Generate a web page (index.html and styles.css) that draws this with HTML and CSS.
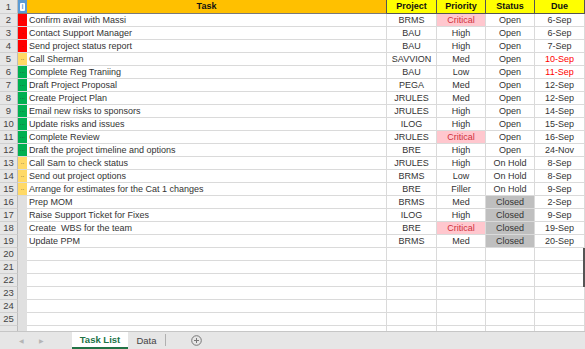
FILE: index.html
```html
<!DOCTYPE html>
<html lang="en">
<head>
    <meta charset="UTF-8">
    <title>Task List</title>
    <link rel="stylesheet" href="styles.css">
</head>
<body>
    <div class="sheet">
        <div class="row head">
            <div class="num">1</div>
            <div class="ind-head"><span class="info">i</span></div>
            <div class="h-task">Task</div>
            <div class="h-col">Project</div>
            <div class="h-col">Priority</div>
            <div class="h-col">Status</div>
            <div class="h-col">Due</div>
        </div>
        <div id="rows"></div>
        <div class="scroll-thumb"></div>
    </div>

    <div class="tabbar">
        <span class="arrow">&#9664;</span>
        <span class="arrow">&#9654;</span>
        <span class="tab active">Task List</span>
        <span class="tab">Data</span>
        <span class="add-tab">
            <svg width="11" height="11" viewBox="0 0 11 11">
                <circle cx="5.5" cy="5.5" r="4.8" fill="none" stroke="#777" stroke-width="1"/>
                <path d="M5.5 3v5M3 5.5h5" stroke="#777" stroke-width="1"/>
            </svg>
        </span>
    </div>

    <script>
        // task rows: task, project, priority, status, due, flag colour, late
        const tasks = [
            ['Confirm avail with Massi', 'BRMS', 'Critical', 'Open', '6-Sep', 'red'],
            ['Contact Support Manager', 'BAU', 'High', 'Open', '6-Sep', 'red'],
            ['Send project status report', 'BAU', 'High', 'Open', '7-Sep', 'red'],
            ['Call Sherman', 'SAVVION', 'Med', 'Open', '10-Sep', 'amber', true],
            ['Complete Reg Traniing', 'BAU', 'Low', 'Open', '11-Sep', 'green', true],
            ['Draft Project Proposal', 'PEGA', 'Med', 'Open', '12-Sep', 'green'],
            ['Create Project Plan', 'JRULES', 'Med', 'Open', '12-Sep', 'green'],
            ['Email new risks to sponsors', 'JRULES', 'High', 'Open', '14-Sep', 'green'],
            ['Update risks and issues', 'ILOG', 'High', 'Open', '15-Sep', 'green'],
            ['Complete Review', 'JRULES', 'Critical', 'Open', '16-Sep', 'green'],
            ['Draft the project timeline and options', 'BRE', 'High', 'Open', '24-Nov', 'green'],
            ['Call Sam to check status', 'JRULES', 'High', 'On Hold', '8-Sep', 'amber'],
            ['Send out project options', 'BRMS', 'Low', 'On Hold', '8-Sep', 'amber'],
            ['Arrange for estimates for the Cat 1 changes', 'BRE', 'Filler', 'On Hold', '9-Sep', 'amber'],
            ['Prep MOM', 'BRMS', 'Med', 'Closed', '2-Sep', 'grey'],
            ['Raise Support Ticket for Fixes', 'ILOG', 'High', 'Closed', '9-Sep', 'grey'],
            ['Create \u00a0WBS for the team', 'BRE', 'Critical', 'Closed', '19-Sep', 'grey'],
            ['Update PPM', 'BRMS', 'Med', 'Closed', '20-Sep', 'grey']
        ];

        const dots = { red: '.', amber: '..', green: '...', grey: '' };

        function buildRows() {
            const rows = document.getElementById('rows');
            let html = '';
            tasks.forEach((t, i) => {
                html += `
                    <div class="row">
                        <div class="num">${i + 2}</div>
                        <div class="ind ${t[5]}">${dots[t[5]]}</div>
                        <div class="cell task">${t[0]}</div>
                        <div class="cell">${t[1]}</div>
                        <div class="cell ${t[2] === 'Critical' ? 'critical' : ''}">${t[2]}</div>
                        <div class="cell ${t[3] === 'Closed' ? 'closed' : ''}">${t[3]}</div>
                        <div class="cell ${t[6] ? 'late' : ''}">${t[4]}</div>
                    </div>`;
            });
            for (let n = 20; n <= 25; n++) {
                html += `
                    <div class="row">
                        <div class="num">${n}</div>
                        <div class="ind grey"></div>
                        <div class="cell task"></div>
                        <div class="cell"></div>
                        <div class="cell"></div>
                        <div class="cell"></div>
                        <div class="cell"></div>
                    </div>`;
            }
            // partly hidden last row
            html += `
                <div class="row">
                    <div class="num"></div>
                    <div class="ind grey"></div>
                    <div class="cell task"></div>
                    <div class="cell"></div>
                    <div class="cell"></div>
                    <div class="cell"></div>
                    <div class="cell"></div>
                </div>`;
            rows.innerHTML = html;
        }

        buildRows();
    </script>
</body>
</html>
```

FILE: styles.css
```css
* {
    margin: 0;
    padding: 0;
    box-sizing: border-box;
}

body {
    width: 585px;
    height: 349px;
    overflow: hidden;
    background: #fff;
    font-family: 'Liberation Sans', Arial, sans-serif;
    font-size: 9px;
    color: #333;
}

.sheet {
    position: relative;
    height: 331px;
    overflow: hidden;
}

.row {
    display: grid;
    grid-template-columns: 18px 9px 360px 50px 49px 49px 50px;
    height: 13px;
    line-height: 12px;
}

.row.head {
    height: 14px;
    line-height: 13px;
}

.num {
    background: #e6e6e6;
    color: #444;
    font-size: 9.5px;
    text-align: center;
    border-right: 1px solid #bdbdbd;
    border-bottom: 1px solid #d0d0d0;
}

.ind-head {
    background: #5b9bd5;
    border-bottom: 1px solid #7a7a7a;
    display: flex;
    justify-content: center;
    align-items: center;
}

.info {
    display: block;
    width: 5px;
    height: 8px;
    background: #fff;
    color: #5b9bd5;
    font-size: 7px;
    font-weight: bold;
    line-height: 8px;
    text-align: center;
    border-radius: 1px;
}

.h-task {
    background: #ffc000;
    font-weight: bold;
    text-align: center;
    border-bottom: 1px solid #7a7a7a;
    border-right: 1px solid #555;
    color: #111;
}

.h-col {
    background: #ffff00;
    font-weight: bold;
    text-align: center;
    border-right: 1px solid #555;
    border-bottom: 1px solid #555;
    color: #111;
}

.ind {
    font-size: 6px;
    line-height: 10px;
    color: #333;
    text-align: center;
    overflow: hidden;
    border-bottom: 1px solid #d9d9d9;
}

.ind.red { background: #ff0000; }
.ind.amber { background: #ffd966; }
.ind.green { background: #00b050; }
.ind.grey { background: #e0e0e0; border-bottom-color: #e0e0e0; }

.cell {
    text-align: center;
    border-right: 1px solid #dadada;
    border-bottom: 1px solid #dadada;
    white-space: nowrap;
    overflow: hidden;
}

.cell.task {
    text-align: left;
    padding-left: 2px;
    white-space: pre;
}

.cell.critical {
    background: #ffc7ce;
    color: #d0303c;
}

.cell.closed {
    background: #bfbfbf;
}

.cell.late {
    color: #ff0000;
}

.scroll-thumb {
    position: absolute;
    right: 0;
    top: 248px;
    width: 2px;
    height: 39px;
    background: #555;
}

/* sheet tabs */
.tabbar {
    height: 18px;
    background: #e6e6e6;
    border-top: 1px solid #c6c6c6;
    display: flex;
    align-items: stretch;
    font-size: 9.5px;
}

.arrow {
    font-size: 6px;
    color: #b5b5b5;
    width: 20px;
    display: flex;
    align-items: center;
    justify-content: center;
}

.arrow:first-child {
    margin-left: 11px;
}

.tab {
    display: flex;
    align-items: center;
    justify-content: center;
    color: #444;
    width: 38px;
    border-right: 1px solid #b0b0b0;
    margin: 2px 0 3px;
}

.tab.active {
    margin: 0 0 0 21px;
    width: 56px;
    background: #fff;
    color: #217346;
    font-weight: bold;
    border-right: none;
    border-bottom: 2px solid #217346;
}

.add-tab {
    display: flex;
    align-items: center;
    margin-left: 25px;
}
```
